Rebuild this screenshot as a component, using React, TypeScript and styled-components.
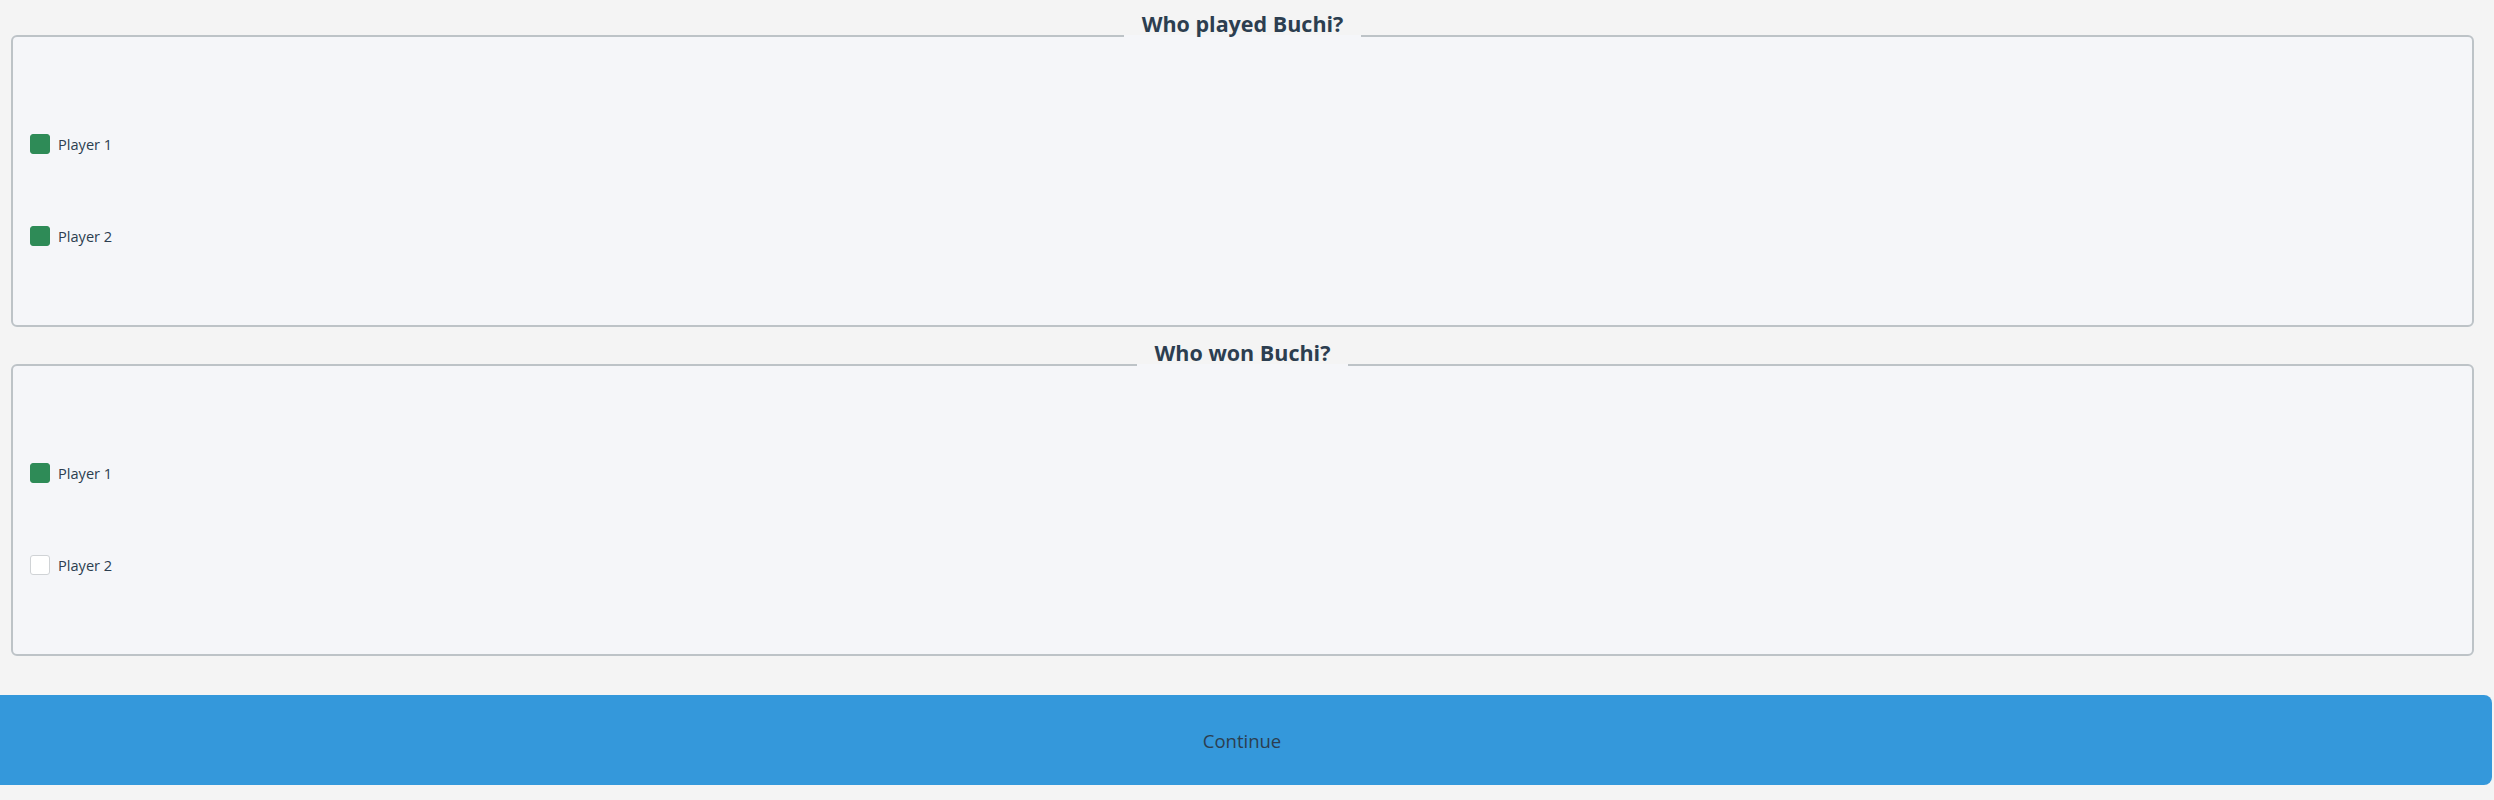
import React, { useState } from "react";
import styled, { createGlobalStyle } from "styled-components";

const GlobalStyle = createGlobalStyle`
  html, body {
    margin: 0;
    padding: 0;
    background: #f4f4f4;
    font-family: "Open Sans", "Noto Sans", "Liberation Sans", sans-serif;
    color: #2c3e50;
    overflow: hidden;
  }
`;

const Page = styled.main`
  display: flex;
  flex-direction: column;
  padding: 9px 20px 0 11px;
`;

const Group = styled.fieldset`
  margin: 0 0 11px 0;
  padding: 36px 17px 43px 17px;
  border: 2px solid #bdc3c7;
  border-radius: 6px;
  background: #f5f6f9;
  min-width: 0;
  display: flex;
  flex-direction: column;
`;

const Legend = styled.legend`
  margin: 0 auto;
  padding: 0 18px 23px 18px;
  font-size: 21.5px;
  font-weight: 700;
  line-height: 30px;
  color: #2c3e50;
`;

const Row = styled.label`
  display: flex;
  align-items: center;
  gap: 8px;
  height: 92px;
  font-size: 14.6px;
  color: #2c3e50;
  cursor: pointer;
`;

const Box = styled.span<{ $checked: boolean }>`
  width: 20px;
  height: 20px;
  box-sizing: border-box;
  border-radius: 3px;
  background: ${(p) => (p.$checked ? "#2e8b57" : "#ffffff")};
  border: 1px solid ${(p) => (p.$checked ? "#2e8b57" : "#d0d3d6")};
  flex: none;
`;

const HiddenInput = styled.input`
  display: none;
`;

const ContinueButton = styled.button`
  margin: 28px 0 0 -19px;
  width: calc(100% + 37px);
  height: 90px;
  border: none;
  border-radius: 8px;
  background: #3498db;
  color: #2c3e50;
  font-family: inherit;
  font-size: 18.5px;
  cursor: pointer;
`;

type Player = { id: string; name: string };

const players: Player[] = [
  { id: "p1", name: "Player 1" },
  { id: "p2", name: "Player 2" },
];

function CheckGroup({
  title,
  value,
  onToggle,
}: {
  title: string;
  value: Record<string, boolean>;
  onToggle: (id: string) => void;
}) {
  return (
    <Group>
      <Legend>{title}</Legend>
      {players.map((p) => (
        <Row key={p.id}>
          <HiddenInput
            type="checkbox"
            checked={!!value[p.id]}
            onChange={() => onToggle(p.id)}
          />
          <Box $checked={!!value[p.id]} />
          {p.name}
        </Row>
      ))}
    </Group>
  );
}

export default function App() {
  const [played, setPlayed] = useState<Record<string, boolean>>({ p1: true, p2: true });
  const [won, setWon] = useState<Record<string, boolean>>({ p1: true, p2: false });
  return (
    <>
      <GlobalStyle />
      <Page>
        <CheckGroup
          title="Who played Buchi?"
          value={played}
          onToggle={(id) => setPlayed((s) => ({ ...s, [id]: !s[id] }))}
        />
        <CheckGroup
          title="Who won Buchi?"
          value={won}
          onToggle={(id) => setWon((s) => ({ ...s, [id]: !s[id] }))}
        />
        <ContinueButton type="button">Continue</ContinueButton>
      </Page>
    </>
  );
}
